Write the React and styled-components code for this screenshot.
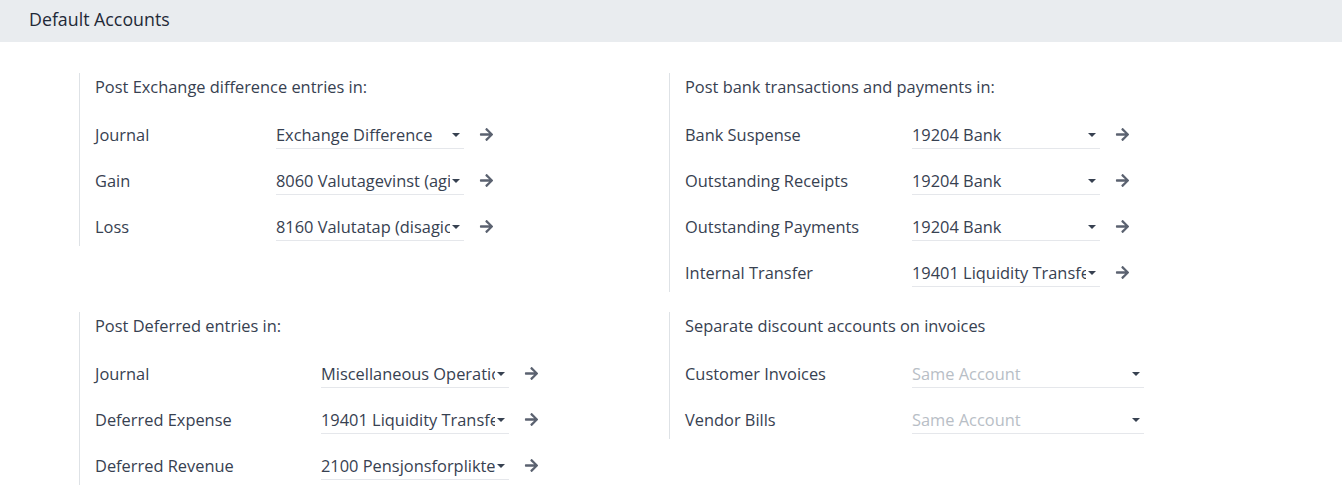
import styled, { createGlobalStyle } from "styled-components";
import { FaArrowRight } from "react-icons/fa";

const GlobalStyle = createGlobalStyle`
  body {
    margin: 0;
    background: #fff;
    font-family: "Open Sans", "Noto Sans", sans-serif;
    color: #374151;
  }
`;

const blocks = [
  {
    title: "Post Exchange difference entries in:",
    labelWidth: 181,
    rows: [
      { label: "Journal", value: "Exchange Difference" },
      { label: "Gain", value: "8060 Valutagevinst (agio)" },
      { label: "Loss", value: "8160 Valutatap (disagio)" },
    ],
  },
  {
    title: "Post bank transactions and payments in:",
    labelWidth: 227,
    rows: [
      { label: "Bank Suspense", value: "19204 Bank" },
      { label: "Outstanding Receipts", value: "19204 Bank" },
      { label: "Outstanding Payments", value: "19204 Bank" },
      { label: "Internal Transfer", value: "19401 Liquidity Transfer" },
    ],
  },
  {
    title: "Post Deferred entries in:",
    labelWidth: 226,
    rows: [
      { label: "Journal", value: "Miscellaneous Operations" },
      { label: "Deferred Expense", value: "19401 Liquidity Transfer" },
      { label: "Deferred Revenue", value: "2100 Pensjonsforpliktelser" },
    ],
  },
  {
    title: "Separate discount accounts on invoices",
    labelWidth: 227,
    wide: true,
    rows: [
      { label: "Customer Invoices", placeholder: "Same Account" },
      { label: "Vendor Bills", placeholder: "Same Account" },
    ],
  },
];

const App = () => {
  return (
    <>
      <GlobalStyle />
      <Header>Default Accounts</Header>
      <Grid>
        {blocks.map((block) => (
          <Block key={block.title}>
            <Title>{block.title}</Title>
            <Rows>
              {block.rows.map((row) => (
                <Row key={row.label}>
                  <Label $width={block.labelWidth}>{row.label}</Label>
                  <Field $wide={block.wide}>
                    <Value $placeholder={!row.value}>
                      {row.value || row.placeholder}
                    </Value>
                    <Caret />
                  </Field>
                  {!block.wide && (
                    <Arrow>
                      <FaArrowRight />
                    </Arrow>
                  )}
                </Row>
              ))}
            </Rows>
          </Block>
        ))}
      </Grid>
    </>
  );
};

const Header = styled.div`
  height: 42px;
  background: #e9ecef;
  display: flex;
  align-items: center;
  padding: 0 0 4px 29px;
  box-sizing: border-box;
  font-size: 17.8px;
  color: #1f2937;
`;

const Grid = styled.div`
  display: grid;
  grid-template-columns: 590px 590px;
  align-items: start;
  row-gap: 20px;
  padding: 31px 0 0 79px;
`;

const Block = styled.div`
  border-left: 1px solid #dee2e6;
  padding-left: 15px;
`;

const Title = styled.div`
  font-size: 16.4px;
  line-height: 28px;
  margin-bottom: 13px;
`;

const Rows = styled.div`
  display: flex;
  flex-direction: column;
  gap: 6px;
`;

const Row = styled.div`
  display: flex;
  align-items: center;
  height: 40px;
  font-size: 16.4px;
`;

const Label = styled.div`
  width: ${({ $width }) => $width}px;
  flex-shrink: 0;
`;

const Field = styled.div`
  width: ${({ $wide }) => ($wide ? 232 : 188)}px;
  height: 30px;
  box-sizing: border-box;
  border-bottom: 1px solid #e5e7eb;
  display: flex;
  align-items: center;
  padding-right: 4px;
`;

const Value = styled.div`
  flex: 1;
  overflow: hidden;
  white-space: nowrap;
  padding-top: 1px;
  color: ${({ $placeholder }) => ($placeholder ? "#b8bec6" : "#374151")};
`;

const Caret = styled.span`
  width: 0;
  height: 0;
  margin-left: 2px;
  border-left: 4px solid transparent;
  border-right: 4px solid transparent;
  border-top: 4px solid #374151;
  margin-top: 3px;
`;

const Arrow = styled.span`
  display: flex;
  margin-left: 15px;
  color: #5b6270;
  font-size: 15px;
`;

export default App;
